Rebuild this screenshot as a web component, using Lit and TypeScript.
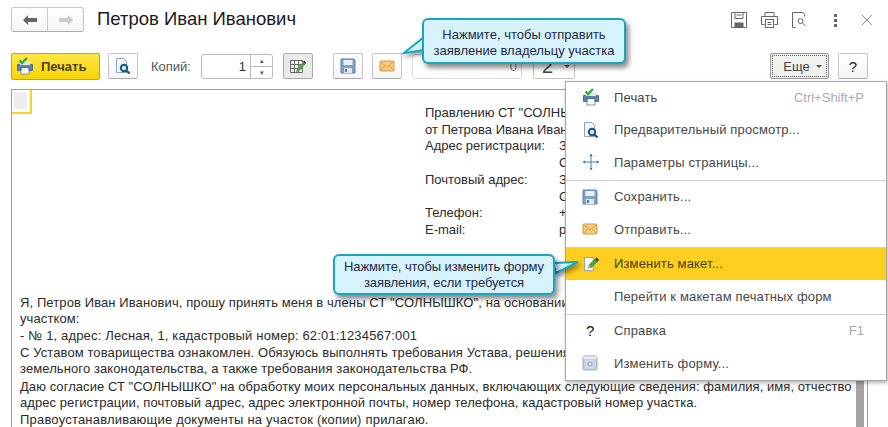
import { LitElement, html, css, svg } from "lit";
import { customElement } from "lit/decorators.js";

const printIcon = svg`<svg width="18" height="18" viewBox="0 0 18 18"><rect x="5" y="9" width="8" height="8" fill="#fff" stroke="#7f93a6"/><path d="M1.5 7.5h15v6h-3.5v-3H5v3H1.5z" fill="#5f86a8" stroke="#4c6f8e"/><rect x="4" y="4" width="10" height="4" fill="#dfe6ec"/><path d="M3.500 3.500l2.500 2.500 5-5" fill="none" stroke="#3ca83a" stroke-width="2.400"/></svg>`;
const previewIcon = svg`<svg width="18" height="18" viewBox="0 0 18 18"><path d="M2.500 1.500h7l3 3v11h-10z" fill="#f4f6f8" stroke="#8fa3b5"/><circle cx="10" cy="11" r="3.200" fill="#cfe7f5" stroke="#17567f" stroke-width="2"/><path d="M12.500 13.500l3 3" stroke="#17567f" stroke-width="2.200"/></svg>`;
const pageIcon = svg`<svg width="18" height="18" viewBox="0 0 18 18"><rect x="3.500" y="3.500" width="11" height="11" fill="none" stroke="#dbe3ea" stroke-dasharray="1 1"/><path d="M9 1v16M1 9h16" stroke="#3f83b5"/><path d="M7.500 3L9 1l1.500 2zM7.500 15L9 17l1.500-2zM3 7.500L1 9l2 1.500zM15 7.500L17 9l-2 1.500z" fill="#2f75a8"/></svg>`;
const saveIcon = svg`<svg width="16" height="16" viewBox="0 0 16 16"><path d="M1 1h13l1 1v13H1z" fill="#7fa3c8" stroke="#5f83a8"/><rect x="3.500" y="2" width="9" height="5" fill="#eaf0f5"/><rect x="4" y="10" width="8" height="5" fill="#dfe6ec"/><rect x="5" y="11" width="2" height="3" fill="#55789c"/></svg>`;
const mailIcon = svg`<svg width="16" height="14" viewBox="0 0 16 14"><rect x="1" y="2" width="14" height="10" rx="1" fill="#f4cb80" stroke="#d19a3e"/><path d="M1 2.500l7 5.500 7-5.500M1 12l5-5.500M15 12l-5-5.500" fill="none" stroke="#d89f45"/></svg>`;
const editIcon = svg`<svg width="18" height="18" viewBox="0 0 18 18"><path d="M2.500 2.500h9v13h-9z" fill="#fbfbf8" stroke="#9aa3a8"/><path d="M6 13l1-3 6-6 2.500 2.500-6 6z" fill="#4fa33e" stroke="#3b7a30" stroke-width=".6"/><path d="M13 4l1.500-1.500 2.500 2.500-1.500 1.500z" fill="#333"/><path d="M6 13l1-3 2 2z" fill="#e9c99a"/></svg>`;
const tableIcon = svg`<svg width="18" height="18" viewBox="0 0 18 18"><path d="M1.500 3.500h12v12h-12zM1.500 7.500h12M1.500 11.500h12M5.500 3.500v12M9.500 3.500v12" fill="#f5f5f5" stroke="#666"/><path d="M7 15l1-3 6-7 2.500 2.200-6.500 7z" fill="#4fa33e"/><path d="M14 5l1-1.500 2.200 2-1 1.500z" fill="#333"/></svg>`;
const formIcon = svg`<svg width="16" height="16" viewBox="0 0 16 16"><rect x="1" y="1" width="14" height="14" rx="1.500" fill="#c3d3e0" stroke="#95a9ba"/><rect x="1.500" y="1.500" width="13" height="2.500" fill="#e8eef3"/><circle cx="8" cy="9" r="3.500" fill="#9fb3c3" stroke="#e6edf2"/><circle cx="8" cy="9" r="1.200" fill="#e6edf2"/></svg>`;

type Item = { icon?: unknown; q?: boolean; text: string; key?: string; active?: boolean } | null;
const menu: Item[] = [
  { icon: printIcon, text: "Печать", key: "Ctrl+Shift+P" },
  { icon: previewIcon, text: "Предварительный просмотр..." },
  { icon: pageIcon, text: "Параметры страницы..." },
  null,
  { icon: saveIcon, text: "Сохранить..." },
  { icon: mailIcon, text: "Отправить..." },
  null,
  { icon: editIcon, text: "Изменить макет...", active: true },
  { text: "Перейти к макетам печатных форм" },
  null,
  { q: true, text: "Справка", key: "F1" },
  { icon: formIcon, text: "Изменить форму..." },
];

@customElement("app-root")
export class AppRoot extends LitElement {
  static styles = css`
    :host { display: block; width: 888px; height: 427px; position: relative; overflow: hidden; background: #fff; font-family: "Liberation Sans", Arial, sans-serif; font-size: 13px; color: #333; }
    .head { display: flex; align-items: flex-start; height: 53px; padding: 7px 0 0 11px; box-sizing: border-box; }
    .nav { display: flex; width: 73px; height: 25px; border: 1px solid #c8c8c8; border-bottom-color: #aaa; border-radius: 3px; box-sizing: border-box; background: linear-gradient(#fff, #f4f4f4); }
    .nav span { flex: 1; display: flex; align-items: center; justify-content: center; }
    .nav span + span { border-left: 1px solid #c8c8c8; }
    h1 { margin: 0 0 0 13px; font-size: 18.500px; font-weight: 400; color: #1a1a1a; line-height: 24px; }
    .tools { margin-left: auto; margin-top: 5px; display: flex; align-items: center; gap: 14px; margin-right: 15px; }
    .tools svg { display: block; }
    .bar { display: flex; align-items: center; height: 26px; padding-left: 11px; padding-right: 20px; }
    .btn { width: 30px; height: 26px; box-sizing: border-box; border: 1px solid #c4c4c4; border-bottom-color: #a8a8a8; border-radius: 2px; background: linear-gradient(#fff, #f5f5f5); display: flex; align-items: center; justify-content: center; flex: none; }
    .print { width: 89px; height: 27px; background: linear-gradient(#ffe74a, #f7d400); border: 1px solid #c9a700; border-radius: 2px; box-sizing: border-box; display: flex; align-items: center; gap: 7px; padding-left: 4px; font-weight: 700; font-size: 13px; color: #4a4020; }
    .prev { margin-left: 8px; }
    .lbl { margin-left: 13px; color: #555; width: 50px; }
    .spin { width: 72px; height: 25px; box-sizing: border-box; border: 1px solid #bbb; border-radius: 3px; display: flex; }
    .spin b { flex: 1; font-weight: 400; text-align: right; padding-right: 4px; line-height: 23px; font-size: 13px; color: #333; }
    .spin i { width: 21px; border-left: 1px solid #bbb; display: grid; grid-template-rows: 1fr 1fr; font-style: normal; font-size: 7px; line-height: 11px; text-align: center; color: #555; }
    .spin i span + span { border-top: 1px solid #bbb; }
    .tbl { margin-left: 10px; background: #eaeaea; border-color: #aaa; }
    .save { margin-left: 20px; }
    .mail { margin-left: 9px; }
    .hidden-in { margin-left: 10px; width: 110px; height: 25px; box-sizing: border-box; border: 1px solid #ddd; border-radius: 3px; text-align: right; padding-right: 4px; line-height: 23px; color: #888; }
    .two { margin-left: 11px; width: 42px; height: 26px; box-sizing: border-box; border: 1px solid #c4c4c4; border-radius: 2px; display: flex; align-items: center; gap: 11px; padding-left: 8px; font-size: 20px; color: #444; }
    .more { margin-left: auto; width: 59px; height: 26px; box-sizing: border-box; border: 1px solid #999; outline: 1px dotted #666; outline-offset: -3px; border-radius: 2px; background: #eef2ec; display: flex; align-items: center; justify-content: center; gap: 6px; padding-left: 6px; color: #444; }
    em { width: 0; height: 0; border: 3px solid transparent; border-top: 3px solid #555; border-bottom: 0; }
    .help { margin-left: 9px; width: 30px; height: 26px; font-size: 15px; color: #222; }
    .doc { position: absolute; left: 11px; top: 89px; width: 857px; height: 338px; box-sizing: border-box; border: 1px solid #a0a0a0; border-width: 1px 1px 0 1px; overflow: hidden; }
    .corner { position: absolute; left: 0; top: 0; width: 20px; height: 24px; background: #fff; border-right: 2px solid #fcd120; border-bottom: 2px solid #fcd120; box-sizing: border-box; }
    .corner::after { content: ""; position: absolute; left: 2px; top: 2px; width: 13px; height: 17px; background: #eee; }
    .addr { position: absolute; left: 413px; top: 15px; line-height: 16.700px; white-space: nowrap; color: #2b2b2b; }
    .row { display: grid; grid-template-columns: 134px auto; }
    .body { position: absolute; left: 8px; top: 205px; white-space: nowrap; line-height: 16px; color: #2b2b2b; letter-spacing: .1px; }
    .body p { margin: 0; }
    .body p:nth-child(2), .body p:nth-child(3), .body p:nth-child(7) { margin-bottom: 1px; }
    .body p:nth-child(3) { letter-spacing: .16px; }
    .body p:nth-child(5) { margin-bottom: 2px; }
    .body p:nth-child(6) { letter-spacing: .06px; }
    .body p:nth-child(7) { letter-spacing: .07px; }
    .body p:nth-child(8) { letter-spacing: .2px; }
    .scroll { position: absolute; left: 844px; top: 288px; width: 8px; bottom: 0; background: #a3a3a3; }
    .menu { position: absolute; left: 565px; top: 81px; width: 322px; height: 300px; box-sizing: border-box; background: #fff; border: 1px solid #a8a8a8; box-shadow: 1px 2px 4px rgba(0,0,0,.3); color: #484848; }
    .it { display: flex; align-items: center; height: 32.500px; padding-left: 15px; letter-spacing: .15px; }
    .it:first-child { margin-top: -1px; }
    .it .ic { width: 33px; display: flex; align-items: center; flex: none; padding-left: 1px; box-sizing: border-box; }
    .it .key { margin-left: auto; margin-right: 22px; color: #aaa; letter-spacing: 0; }
    .it.active { background: #fbce1f; color: #4a4020; }
    .q { font-size: 15px; color: #111; padding-left: 4px; }
    .sep { height: 1px; background: #cfcfcf; margin: 1px 0 0; }
    .call { position: absolute; box-sizing: border-box; background: #d6f3fb; border: 2px solid #18a5c4; border-radius: 6px; box-shadow: 3px 4px 5px rgba(0,0,0,.45); color: #1d2a4a; text-align: center; line-height: 16px; }
    .c1 { left: 422px; top: 18px; width: 204px; height: 46px; padding-top: 7px; }
    .c2 { left: 333px; top: 254px; width: 222px; height: 41px; padding-top: 3px; letter-spacing: -.1px; }
    .tail { position: absolute; overflow: visible; filter: drop-shadow(2px 3px 2px rgba(0,0,0,.4)); }
    .t1 { left: 403px; top: 35px; }
    .t2 { left: 552px; top: 259px; }
  `;

  render() {
    return html`
      <div class="head">
        <div class="nav">
          <span><svg width="16" height="12" viewBox="0 0 16 12"><path d="M1 6l5-5v3h9v4H6v3z" fill="#666"/></svg></span>
          <span><svg width="16" height="12" viewBox="0 0 16 12"><path d="M15 6l-5-5v3H1v4h9v3z" fill="#ccc"/></svg></span>
        </div>
        <h1>Петров Иван Иванович</h1>
        <div class="tools">
          <svg width="16" height="16" viewBox="0 0 16 16" fill="none" stroke="#666"><path d="M.5.500h15v15H.5z"/><path d="M4 .5v6h8v-6M5.500 3h5"/><rect x="4" y="11" width="8" height="4.500" fill="#666"/></svg>
          <svg width="17" height="16" viewBox="0 0 17 16" fill="none" stroke="#666"><path d="M4 4V.5h9V4M3.500 12.500h-3v-8h16v8h-3"/><rect x="4.500" y="7.500" width="8" height="8"/><path d="M6.500 10.500h4M6.500 12.500h4"/></svg>
          <svg width="16" height="16" viewBox="0 0 16 16" fill="none" stroke="#666"><path d="M6 .5H.5v15h3M6 .5h5l1.500 2v2"/><circle cx="8.500" cy="9" r="2.500"/><path d="M10.500 11l3 3"/></svg>
          <svg width="12" height="16" viewBox="0 0 12 16" fill="#666" style="margin-left:8px"><rect x="4" y="2" width="3" height="3"/><rect x="4" y="7" width="3" height="3"/><rect x="4" y="12" width="3" height="3"/></svg>
          <svg width="12" height="12" viewBox="0 0 12 12" fill="none" stroke="#888" style="margin-left:5px"><path d="M1 1l10 10M11 1L1 11"/></svg>
        </div>
      </div>
      <div class="bar">
        <div class="print">${printIcon}<span>Печать</span></div>
        <div class="btn prev">${previewIcon}</div>
        <div class="lbl">Копий:</div>
        <div class="spin"><b>1</b><i><span>▴</span><span>▾</span></i></div>
        <div class="btn tbl">${tableIcon}</div>
        <div class="btn save">${saveIcon}</div>
        <div class="btn mail">${mailIcon}</div>
        <div class="hidden-in">0</div>
        <div class="two"><span>2</span><em></em></div>
        <div class="more">Еще <em></em></div>
        <div class="btn help">?</div>
      </div>
      <div class="doc">
        <div class="corner"></div>
        <div class="addr">
          <div>Правлению СТ "СОЛНЫШКО"</div>
          <div>от Петрова Ивана Ивановича</div>
          <div class="row"><span>Адрес регистрации:</span><span>З</span></div>
          <div class="row"><span></span><span>С</span></div>
          <div class="row"><span>Почтовый адрес:</span><span>З</span></div>
          <div class="row"><span></span><span>С</span></div>
          <div class="row"><span>Телефон:</span><span>+</span></div>
          <div class="row"><span>E-mail:</span><span>p</span></div>
        </div>
        <div class="body">
          <p>Я, Петров Иван Иванович, прошу принять меня в члены СТ "СОЛНЫШКО", на основании</p>
          <p>участком:</p>
          <p>- № 1, адрес: Лесная, 1, кадастровый номер: 62:01:1234567:001</p>
          <p>С Уставом товарищества ознакомлен. Обязуюсь выполнять требования Устава, решения</p>
          <p>земельного законодательства, а также требования законодательства РФ.</p>
          <p>Даю согласие СТ "СОЛНЫШКО" на обработку моих персональных данных, включающих следующие сведения: фамилия, имя, отчество</p>
          <p>адрес регистрации, почтовый адрес, адрес электронной почты, номер телефона, кадастровый номер участка.</p>
          <p>Правоустанавливающие документы на участок (копии) прилагаю.</p>
        </div>
        <div class="scroll"></div>
      </div>
      <div class="menu">
        ${menu.map((m) =>
          m === null
            ? html`<div class="sep"></div>`
            : html`<div class="it ${m.active ? "active" : ""}">
                <span class="ic">${m.q ? html`<span class="q">?</span>` : m.icon}</span>
                <span>${m.text}</span>
                ${m.key ? html`<span class="key">${m.key}</span>` : ""}
              </div>`
        )}
      </div>
      <svg class="tail t1" width="24" height="20" viewBox="0 0 24 20"><path d="M21 2L1 18l21-3z" fill="#d6f3fb" stroke="#18a5c4" stroke-width="2"/></svg>
      <div class="call c1">Нажмите, чтобы отправить<br />заявление владельцу участка</div>
      <svg class="tail t2" width="28" height="22" viewBox="0 0 28 22"><path d="M1 4L26 3 4 14z" fill="#d6f3fb" stroke="#18a5c4" stroke-width="2"/></svg>
      <div class="call c2">Нажмите, чтобы изменить форму<br />заявления, если требуется</div>
    `;
  }
}
